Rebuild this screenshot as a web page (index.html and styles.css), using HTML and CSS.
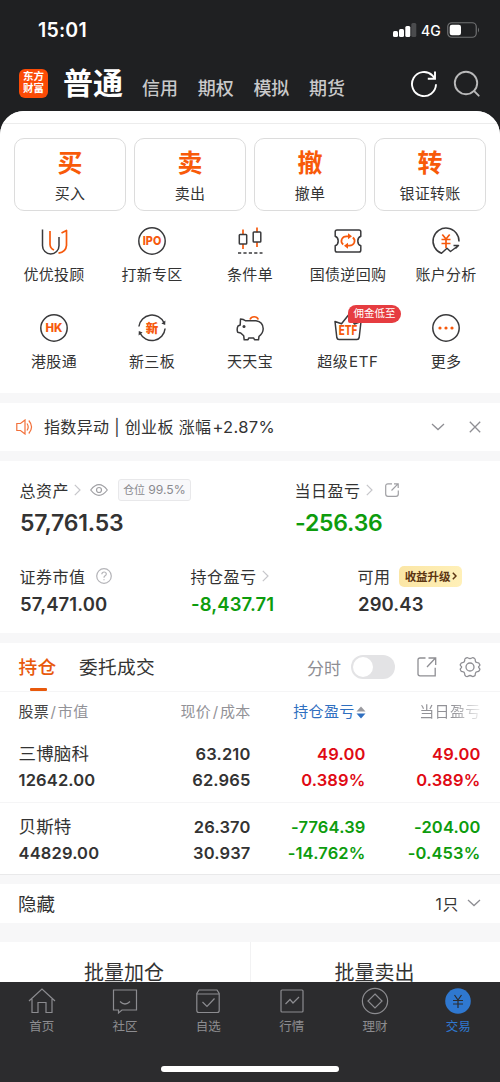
FILE: index.html
```html
<!DOCTYPE html>
<html lang="zh-CN">
<head>
    <meta charset="UTF-8">
    <meta name="viewport" content="width=device-width, initial-scale=1.0">
    <title>普通交易</title>
    <link rel="stylesheet" href="styles.css">
</head>
<body>
<div class="app">

    <!-- Status bar -->
    <div class="status-bar">
        <span class="time">15:01</span>
        <div class="status-right">
            <svg width="24" height="14" viewBox="0 0 24 14" fill="#fff">
                <rect x="0" y="8" width="5" height="6" rx="1.5"/>
                <rect x="6" y="6" width="5" height="8" rx="1.5"/>
                <rect x="12.3" y="3" width="5" height="11" rx="1.5"/>
                <rect x="18.3" y="0" width="5" height="14" rx="1.5" fill="#4a4b4d"/>
            </svg>
            <span class="network">4G</span>
            <svg width="33" height="16" viewBox="0 0 33 16">
                <rect x="0.75" y="0.75" width="28.5" height="14.5" rx="4" fill="none" stroke="#707173" stroke-width="1.2"/>
                <rect x="2.7" y="2.7" width="11.3" height="10.6" rx="2.2" fill="#fff"/>
                <path d="M31 5.5q2 2.5 0 5z" fill="#707173"/>
            </svg>
        </div>
    </div>

    <!-- Header -->
    <header class="header">
        <div class="logo"><span>东方</span><span>财富</span></div>
        <h1>普通</h1>
        <nav class="account-nav">
            <a>信用</a>
            <a>期权</a>
            <a>模拟</a>
            <a>期货</a>
        </nav>
        <div class="header-icons">
            <svg width="28" height="28" viewBox="0 0 28 28" fill="none" stroke="#fff" stroke-width="1.9">
                <path d="M26 14.3a12 12 0 1 1-3.6-8.8l2.2 2.8"/>
                <path d="M25 1.5v7.2h-7.2"/>
            </svg>
            <svg width="28" height="28" viewBox="0 0 28 28" fill="none" stroke="#b9b9ba" stroke-width="1.9" stroke-linecap="round">
                <circle cx="13" cy="13" r="11.2"/>
                <path d="M21.2 21.2l4.5 4.5"/>
            </svg>
        </div>
    </header>

    <main class="sheet">

        <!-- Trade actions -->
        <section class="trade">
            <div class="actions">
                <div class="action"><strong>买</strong><span>买入</span></div>
                <div class="action"><strong>卖</strong><span>卖出</span></div>
                <div class="action"><strong>撤</strong><span>撤单</span></div>
                <div class="action"><strong>转</strong><span>银证转账</span></div>
            </div>

            <div class="tools">
                <div class="tool">
                    <svg class="icon" viewBox="0 0 28 28">
                        <path class="dark" d="M2.5 2.5v16.2a8 8 0 0 0 16.5 0V10"/>
                        <path class="orange" d="M10 4v13.5q.3 4 4 5.5M21.5 6l5-2.6v15q-.5 6.5-8 7.8"/>
                    </svg>
                    <span>优优投顾</span>
                </div>
                <div class="tool">
                    <svg class="icon" viewBox="0 0 28 28">
                        <circle class="dark" cx="14" cy="14" r="13.2"/>
                        <text class="icon-text" x="14" y="18.3" font-size="12" textLength="18.5" lengthAdjust="spacingAndGlyphs">IPO</text>
                    </svg>
                    <span>打新专区</span>
                </div>
                <div class="tool">
                    <svg class="icon" viewBox="0 0 28 28">
                        <path class="orange" d="M7 2.5v5M7 17v5M21 .5v5M21 15v5"/>
                        <rect class="dark" x="3.3" y="7.5" width="7.4" height="9.5" rx=".8"/>
                        <rect class="dark" x="17.2" y="5" width="7.6" height="10" rx=".8"/>
                        <path class="dark" stroke-dasharray="3.2 2.2" d="M2 26h24.5"/>
                    </svg>
                    <span>条件单</span>
                </div>
                <div class="tool">
                    <svg class="icon" viewBox="0 0 28 28">
                        <path class="dark" d="M3 3h22q1.800 0 1.800 1.800v4.400c-4 1.500-4 8 0 9.600v4.400q0 1.800-1.800 1.800H3q-1.800 0-1.800-1.800v-4.400c4-1.600 4-8.100 0-9.600V4.800Q1.200 3 3 3z"/>
                        <path class="orange" d="M9.200 17.500C5.500 14.500 8 9.300 12.500 9.300H15M18.800 10.500c3.700 3 1.200 8.200-3.300 8.200H13"/>
                        <path class="orange-fill" d="M14 6.300v6l4-3zM14 15.700v6l-4-3z"/>
                    </svg>
                    <span>国债逆回购</span>
                </div>
                <div class="tool">
                    <svg class="icon" viewBox="0 0 28 28">
                        <path class="dark" d="M27 14.500A13 13 0 1 0 9.500 26.300l5.500-5 3.500 3.200 8-6H21.500M26.500 18.500l-3 3"/>
                        <path class="orange" d="M10.300 7.500L14 12l3.700-4.500M14 12v9M9.500 12.500h9M9.500 16.500h9"/>
                    </svg>
                    <span>账户分析</span>
                </div>
                <div class="tool">
                    <svg class="icon" viewBox="0 0 28 28">
                        <circle class="dark" cx="14" cy="14" r="13.2"/>
                        <text class="icon-text" x="14" y="18.2" font-size="11.5" textLength="17" lengthAdjust="spacingAndGlyphs">HK</text>
                    </svg>
                    <span>港股通</span>
                </div>
                <div class="tool">
                    <svg class="icon" viewBox="0 0 28 28">
                        <path class="dark" d="M.9 12.500A13.200 13.200 0 0 1 26 8.800M27.100 14.500A13.200 13.200 0 0 1 2 19"/>
                        <path class="dark-fill" d="M27.400 6.500l-.2 4.500-3.800-1.500zM.6 21.500l.2-4.500 3.800 1.500z"/>
                        <text class="icon-text" x="14" y="18.5" font-size="12.5">新</text>
                    </svg>
                    <span>新三板</span>
                </div>
                <div class="tool">
                    <svg class="icon" viewBox="0 0 28 28">
                        <path class="orange" d="M14 5.500a4.500 4.500 0 0 1 8.300 0"/>
                        <path class="dark" d="M4.500 5q3 0 5 1.800H20q7 1 7.200 8-.2 5-4.200 7.500l-.5 3.500h-4l-.8-1.800h-5l-.7 1.800H8.200l-.5-4-3-2.800-3-.8q-1.200-3.200.3-6.200l2.200-1z"/>
                        <circle class="dark-fill" cx="8" cy="12.5" r="1.5"/>
                    </svg>
                    <span>天天宝</span>
                </div>
                <div class="tool">
                    <svg class="icon" viewBox="0 0 28 28">
                        <path class="dark" d="M1 7.500l6.500 2.300L14.500 1l6 9L27 7.500l-1.800 16q-.4 2-2.200 2H5q-1.800 0-2.200-2z"/>
                        <text class="icon-text" x="14" y="21" font-size="13" textLength="18.5" lengthAdjust="spacingAndGlyphs">ETF</text>
                    </svg>
                    <span>超级<small>ETF</small></span>
                    <em class="tip">佣金低至</em>
                </div>
                <div class="tool">
                    <svg class="icon" viewBox="0 0 28 28">
                        <circle class="dark" cx="14" cy="14" r="13.2"/>
                        <g class="orange-fill">
                            <circle cx="8" cy="14" r="1.6"/>
                            <circle cx="14" cy="14" r="1.6"/>
                            <circle cx="20" cy="14" r="1.6"/>
                        </g>
                    </svg>
                    <span>更多</span>
                </div>
            </div>
        </section>

        <!-- Notice -->
        <section class="notice">
            <svg width="17" height="16" viewBox="0 0 17 16" fill="none" stroke="#f2703a" stroke-width="1.2">
                <path d="M.8 4.500h3.700L9 1v14l-4.500-3.500H.8z"/>
                <path d="M11 4.500q2.400 3.500 0 7M12.800 1.500q5.500 6.500 0 13"/>
            </svg>
            <p>指数异动 | 创业板 涨幅<span>+2.87%</span></p>
            <svg width="14" height="8" viewBox="0 0 14 8" class="gray-line"><path d="M1 1l6 5.500L13 1"/></svg>
            <svg width="12" height="12" viewBox="0 0 12 12" class="gray-line"><path d="M.8.8l10.400 10.400M11.200.8L.8 11.200"/></svg>
        </section>

        <!-- Assets -->
        <section class="assets">
            <div class="assets-main">
                <div class="asset">
                    <div class="asset-label">
                        <span>总资产</span>
                        <svg class="chevron" viewBox="0 0 7 12"><path d="M.8.8L6 6 .8 11.200"/></svg>
                        <svg class="eye" width="18" height="12" viewBox="0 0 18 12"><path d="M.7 6Q9-4.600 17.300 6 9 16.600.7 6z"/><circle cx="9" cy="6" r="2.5"/></svg>
                        <span class="ratio">仓位 <b>99.5%</b></span>
                    </div>
                    <div class="asset-value">57,761.53</div>
                </div>
                <div class="asset">
                    <div class="asset-label">
                        <span>当日盈亏</span>
                        <svg class="chevron" viewBox="0 0 7 12"><path d="M.8.8L6 6 .8 11.200"/></svg>
                        <svg class="share" width="14" height="14" viewBox="0 0 14 14"><path d="M7 .8H3Q.7.800.7 3v8q0 2.300 2.300 2.300h8q2.300 0 2.300-2.300V7.500M6.500 7.500l6.500-6.700M9 .800h4.200V5"/></svg>
                    </div>
                    <div class="asset-value down">-256.36</div>
                </div>
            </div>
            <div class="assets-sub">
                <div class="asset">
                    <div class="asset-label">
                        <span>证券市值</span>
                        <svg class="help" width="16" height="16" viewBox="0 0 16 16"><circle cx="8" cy="8" r="7.3"/><path d="M5.800 6.200q.2-2.200 2.300-2.200t2.200 2q0 1-1.200 1.800T8 9.700M8 11.200v1.100"/></svg>
                    </div>
                    <div class="asset-value">57,471.00</div>
                </div>
                <div class="asset">
                    <div class="asset-label">
                        <span>持仓盈亏</span>
                        <svg class="chevron" viewBox="0 0 7 12"><path d="M.8.8L6 6 .8 11.200"/></svg>
                    </div>
                    <div class="asset-value down">-8,437.71</div>
                </div>
                <div class="asset">
                    <div class="asset-label">
                        <span>可用</span>
                        <span class="upgrade">收益升级<svg width="5" height="8" viewBox="0 0 5 8"><path d="M.8.8L4 4 .8 7.200"/></svg></span>
                    </div>
                    <div class="asset-value">290.43</div>
                </div>
            </div>
        </section>

        <!-- Holdings -->
        <section class="holdings">
            <div class="tabs">
                <a class="tab active">持仓</a>
                <a class="tab">委托成交</a>
                <span class="switch-label">分时</span>
                <span class="switch"></span>
                <svg class="tab-icon" width="20" height="20" viewBox="0 0 20 20"><path d="M8.500 1H3Q1 1 1 3v14q0 1.800 2 1.800h15.200v-8M10 10l8.500-9M11.500 1h7.200v7"/></svg>
                <svg class="tab-icon" width="22" height="22" viewBox="0 0 22 22"><path d="M6.500 2.500Q8 1 9.300 2q1.700 1.200 3.400 0Q14 1 15.500 2.500q1 .5.800 2.300.2 1.700 2.300 1.900 1.500 0 1.700 1.200 1.200 1.300 0 2.100-1.500 1 0 2.200 1.200 1 0 2.300-.5 1.300-2 1.200-1.800.2-2 2 .2 2-1.200 2.400-1.200 1-2.400 0-1.700-1.200-3.400 0-1.200 1-2.800-.2-1-.6-.8-2.200-.2-1.800-2-2-1.700 0-2-1.400-1-1.200.2-2.100 1.500-1.200 0-2.200-1.200-1-.2-2.200.5-1.300 2-1.200 1.800-.2 2-1.900-.2-1.700.8-2.300z"/><circle cx="11" cy="11" r="4"/></svg>
            </div>

            <div class="row table-head">
                <span><i>股票</i><u>/</u>市值</span>
                <span>现价<u>/</u>成本</span>
                <span class="sorted">持仓盈亏<svg width="10" height="13" viewBox="0 0 10 13"><path d="M.5 5.500L5 .5l4.500 5z" fill="#9a9a9f"/><path d="M.5 7.500L5 12.500l4.500-5z" fill="#2f6fc0"/></svg></span>
                <span class="faded">当日盈亏</span>
            </div>

            <div class="row stock">
                <div><span class="name">三博脑科</span><span>12642.00</span></div>
                <div><span>63.210</span><span>62.965</span></div>
                <div class="up"><span>49.00</span><span>0.389%</span></div>
                <div class="up"><span>49.00</span><span>0.389%</span></div>
            </div>

            <div class="row stock">
                <div><span class="name">贝斯特</span><span>44829.00</span></div>
                <div><span>26.370</span><span>30.937</span></div>
                <div class="down"><span>-7764.39</span><span>-14.762%</span></div>
                <div class="down"><span>-204.00</span><span>-0.453%</span></div>
            </div>
        </section>

        <section class="hidden-stocks">
            <span>隐藏</span>
            <span class="count">1只</span>
            <svg width="14" height="8" viewBox="0 0 14 8" class="gray-line"><path d="M1 1l6 5.500L13 1"/></svg>
        </section>

        <section class="batch">
            <a>批量加仓</a>
            <a>批量卖出</a>
        </section>
    </main>

    <!-- Bottom tab bar -->
    <footer class="tab-bar">
        <nav>
            <a>
                <svg viewBox="0 0 28 28"><path d="M1 14L14 2l13 12M4 12v13.500h6V15.500h8v10h6V12"/></svg>
                <span>首页</span>
            </a>
            <a>
                <svg viewBox="0 0 28 28"><path d="M2.500 3h23v20H11l-3.500 3v-3h-5zM9 14.500q5 5 10 0"/></svg>
                <span>社区</span>
            </a>
            <a>
                <svg viewBox="0 0 28 28"><path d="M2.800 6.500L5 3h18l2.200 3.500v17q0 2-2 2H4.800q-2 0-2-2zM2.800 7h22.400M8.500 15l4.500 4.500 7.500-8"/></svg>
                <span>自选</span>
            </a>
            <a>
                <svg viewBox="0 0 28 28"><rect x="3" y="3" width="22" height="22" rx="1"/><path d="M7.500 17l4.500-4.500 3 3.500 6-6"/></svg>
                <span>行情</span>
            </a>
            <a>
                <svg viewBox="0 0 28 28"><circle cx="14" cy="14" r="12.6"/><path d="M14 7l7 7-7 7-7-7z"/></svg>
                <span>理财</span>
            </a>
            <a class="current">
                <svg viewBox="0 0 28 28"><circle cx="14" cy="14" r="12.8"/><path d="M10.500 8l3.500 5 3.500-5M14 13v8M9 13.500h10M9 17h10"/></svg>
                <span>交易</span>
            </a>
        </nav>
        <div class="home-indicator"></div>
    </footer>

</div>
</body>
</html>
```
FILE: styles.css
```css
/* Reset */
* {
    margin: 0;
    padding: 0;
    box-sizing: border-box;
}

body {
    font-family: 'Inter', 'Noto Sans CJK SC', sans-serif;
    background: #1f2022;
    color: #333;
}

i, em {
    font-style: normal;
}

svg {
    display: block;
    flex-shrink: 0;
}

.app {
    width: 500px;
    height: 1082px;
    display: flex;
    flex-direction: column;
    overflow: hidden;
}

/* Status bar */
.status-bar {
    height: 60px;
    padding: 0 20px 0 38px;
    display: flex;
    align-items: center;
    justify-content: space-between;
    color: #fff;
}

.time {
    font-size: 19.5px;
    font-weight: 600;
    letter-spacing: 0.2px;
}

.status-right {
    display: flex;
    align-items: center;
    gap: 4px;
}

.network {
    width: 22px;
    font-size: 14px;
    font-weight: 500;
}

/* Header */
.header {
    height: 51px;
    flex-shrink: 0;
    padding: 0 19px;
    display: flex;
    align-items: flex-start;
    color: #fff;
}

.logo {
    width: 29px;
    height: 29px;
    margin-top: 9px;
    padding-top: 2px;
    border-radius: 6px;
    background: #fb4b06;
    display: flex;
    flex-direction: column;
    align-items: center;
}

.logo span {
    font-size: 10.5px;
    line-height: 12px;
    font-weight: 700;
}

h1 {
    margin: 1px 0 0 15px;
    font-size: 30px;
    line-height: 45px;
    font-weight: 600;
}

.account-nav {
    display: flex;
    gap: 19.7px;
    margin: 13px 0 0 19px;
    font-size: 18px;
    line-height: 31px;
    font-weight: 500;
    color: #c9c9ca;
}

.header-icons {
    display: flex;
    gap: 15px;
    margin: 10px 0 0 auto;
}

/* Sheet */
.sheet {
    flex: 1;
    min-height: 0;
    overflow: hidden;
    border-radius: 24px 24px 0 0;
    background: #f7f7f8;
}

section {
    background: #fff;
}

.trade {
    height: 282px;
    padding-top: 12px;
}

.actions {
    display: grid;
    grid-template-columns: repeat(4, 1fr);
    gap: 8px;
    padding: 14px 14px 0;
    border-top: 1px solid #ececec;
}

.action {
    height: 73px;
    padding-top: 9px;
    border: 1px solid #dcdcdc;
    border-radius: 10px;
    display: flex;
    flex-direction: column;
    align-items: center;
}

.action strong {
    font-size: 25px;
    line-height: 30px;
    font-weight: 600;
    color: #f85a09;
}

.action span {
    margin-top: 4px;
    font-size: 15px;
    line-height: 24px;
    letter-spacing: 0.2px;
}

.tools {
    display: grid;
    grid-template-columns: repeat(5, 1fr);
    row-gap: 27px;
    padding: 16px 5px 0;
}

.tool {
    position: relative;
    height: 60px;
    display: flex;
    flex-direction: column;
    align-items: center;
}

.tool > span {
    margin-top: 8px;
    font-size: 15px;
    line-height: 24px;
    letter-spacing: 0.3px;
    white-space: nowrap;
}

.tool small {
    margin-left: 1px;
    font-size: 15px;
    letter-spacing: 0.7px;
}

.icon {
    width: 28px;
    height: 28px;
    overflow: visible;
}

.dark,
.orange {
    fill: none;
    stroke: #3a3a3c;
    stroke-width: 1.5;
    stroke-linejoin: round;
}

.orange {
    stroke: #f6590c;
    stroke-width: 1.7;
}

.dark-fill {
    fill: #3a3a3c;
}

.orange-fill {
    fill: #f6590c;
}

.icon-text {
    fill: #f6590c;
    font-weight: 800;
    text-anchor: middle;
}

.tip {
    position: absolute;
    left: 49px;
    top: -9px;
    width: 53px;
    height: 18px;
    border-radius: 8px 9px 9px 2px;
    background: #e63c40;
    color: #fff;
    font-size: 10.5px;
    line-height: 18px;
    text-align: center;
}

/* Notice */
.notice {
    height: 48px;
    margin: 10px 0;
    padding: 0 19px 0 16px;
    display: flex;
    align-items: center;
}

.notice p {
    flex: 1;
    margin-left: 11px;
    font-size: 16px;
    line-height: 24px;
    letter-spacing: 0.35px;
}

.notice p span {
    margin-left: 1px;
    font-size: 16.5px;
}

.notice .gray-line + .gray-line {
    margin-left: 24px;
}

.gray-line {
    fill: none;
    stroke: #8e8e93;
    stroke-width: 1.3;
}

/* Assets */
.assets {
    height: 172px;
    padding: 17px 20px 0;
}

.assets-main {
    display: grid;
    grid-template-columns: 275px 1fr;
    height: 86px;
}

.assets-sub {
    display: grid;
    grid-template-columns: 171px 167px 1fr;
}

.asset-label {
    height: 24px;
    display: flex;
    align-items: center;
    font-size: 16px;
    letter-spacing: 0.5px;
    white-space: nowrap;
}

.asset-label > span:first-child {
    margin-left: -0.4px;
}

.chevron {
    width: 7px;
    height: 12px;
    margin-left: 5px;
}

.chevron,
.eye,
.share,
.help {
    fill: none;
    stroke: #b4b4b8;
    stroke-width: 1.2;
}

.chevron {
    stroke: #c6c6ca;
}

.eye {
    margin-left: 9px;
    stroke: #a0a0a4;
}

.share {
    margin-left: 12px;
    stroke: #a0a0a4;
}

.help {
    margin-left: 10px;
}

.ratio {
    height: 22px;
    margin-left: 10px;
    padding: 0 4px;
    border: 1px solid #e8e8ea;
    border-radius: 3px;
    background: #f8f8fa;
    font-size: 11px;
    line-height: 20px;
    letter-spacing: 0;
    color: #8a8a8f;
}

.ratio b {
    font-size: 12.2px;
    font-weight: 400;
}

.asset-value {
    font-weight: 600;
}

.assets-main .asset-value {
    margin-top: 6px;
    font-size: 23px;
    line-height: 30px;
    letter-spacing: -0.2px;
}

.assets-sub .asset-value {
    margin-top: 3px;
    font-size: 18.5px;
    line-height: 26px;
    letter-spacing: 0.1px;
}

.upgrade {
    height: 21px;
    margin-left: 8px;
    padding: 0 5px 0 6px;
    border-radius: 5px;
    background: linear-gradient(90deg, #fbe6a6, #fff0b8);
    color: #5c3512;
    display: flex;
    align-items: center;
    font-size: 11.5px;
    font-weight: 700;
    letter-spacing: 0;
}

.upgrade svg {
    margin-left: 1px;
    fill: none;
    stroke: #5c3512;
    stroke-width: 1.5;
}

.up {
    color: #e00a14;
}

.down {
    color: #0d9c0d;
}

/* Holdings */
.holdings {
    height: 232px;
    margin-top: 10px;
    border-bottom: 1px solid #e9e9ea;
}

.tabs {
    height: 49px;
    padding: 0 19px 0 18.5px;
    border-bottom: 1px solid #f5f5f6;
    display: flex;
    align-items: center;
}

.tab {
    position: relative;
    top: 1px;
    margin-right: 22.5px;
    font-size: 18.7px;
    line-height: 28px;
    letter-spacing: 0.3px;
}

.tab.active {
    color: #e8590c;
    font-weight: 500;
}

.tab.active::after {
    content: "";
    position: absolute;
    left: 11px;
    bottom: -9px;
    width: 17px;
    height: 3px;
    border-radius: 1px;
    background: #e8590c;
}

.switch-label {
    margin-left: auto;
    font-size: 17px;
    color: #8e8e93;
}

.switch {
    width: 44px;
    height: 24px;
    margin-left: 10px;
    padding: 2px;
    border-radius: 12px;
    background: #e3e3e5;
}

.switch::before {
    content: "";
    display: block;
    width: 20px;
    height: 20px;
    border-radius: 50%;
    background: #fff;
}

.tab-icon {
    margin-left: 22px;
    fill: none;
    stroke: #8e8e93;
    stroke-width: 1.3;
}

.row {
    display: grid;
    grid-template-columns: 120px 112px 115px 115px;
    padding: 0 19.5px 0 18.5px;
    text-align: right;
}

.row > :first-child {
    text-align: left;
}

.table-head {
    height: 38px;
    font-size: 15px;
    line-height: 39px;
    letter-spacing: 0.3px;
    color: #929297;
    white-space: nowrap;
}

.table-head i {
    color: #444;
}

.table-head u {
    margin: 0 1.5px;
    text-decoration: none;
}

.sorted {
    color: #2f6fc0;
}

.sorted svg {
    display: inline-block;
    vertical-align: -2px;
    margin-left: 1px;
}

.faded {
    background: linear-gradient(90deg, #929297 75%, #f0f0f0 100%);
    background-clip: text;
    color: transparent;
}

.stock {
    height: 72px;
    padding-top: 11px;
    font-size: 16.5px;
    font-weight: 600;
    letter-spacing: 0.15px;
}

.stock + .stock {
    border-top: 1px solid #f5f5f6;
}

.stock span {
    display: block;
    height: 26px;
    line-height: 26px;
}

.stock .name {
    font-size: 17.5px;
    font-weight: 400;
}

/* Hidden stocks */
.hidden-stocks {
    height: 39px;
    margin-top: 9px;
    padding: 0 19px 1px 18px;
    display: flex;
    align-items: center;
    font-size: 18.5px;
}

.count {
    margin: 0 8px 0 auto;
    font-size: 15.5px;
    letter-spacing: 0.8px;
}

/* Batch buttons */
.batch {
    height: 62px;
    margin-top: 19px;
    display: grid;
    grid-template-columns: 1fr 1fr;
    font-size: 20px;
    line-height: 63px;
    text-align: center;
}

.batch a {
    padding-right: 2px;
}

.batch a + a {
    border-left: 1px solid #f2f2f3;
}

/* Tab bar */
.tab-bar {
    height: 100px;
    flex-shrink: 0;
    background: #2c2c2e;
}

.tab-bar nav {
    display: grid;
    grid-template-columns: repeat(6, 1fr);
    height: 85px;
    padding-top: 5px;
}

.tab-bar a {
    display: flex;
    flex-direction: column;
    align-items: center;
    font-size: 12.5px;
    line-height: 20px;
    color: #8c8c90;
}

.tab-bar svg {
    width: 28px;
    height: 28px;
    margin-bottom: 2px;
    fill: none;
    stroke: #8c8c90;
    stroke-width: 1.2;
}

.tab-bar .current {
    color: #2f78d0;
}

.tab-bar .current circle {
    fill: #2f78d0;
    stroke: none;
}

.tab-bar .current path {
    stroke: #2c2c2e;
    stroke-width: 1.2;
}

.home-indicator {
    width: 178px;
    height: 6px;
    margin: -1px auto 0;
    border-radius: 3px;
    background: #fff;
}
```
